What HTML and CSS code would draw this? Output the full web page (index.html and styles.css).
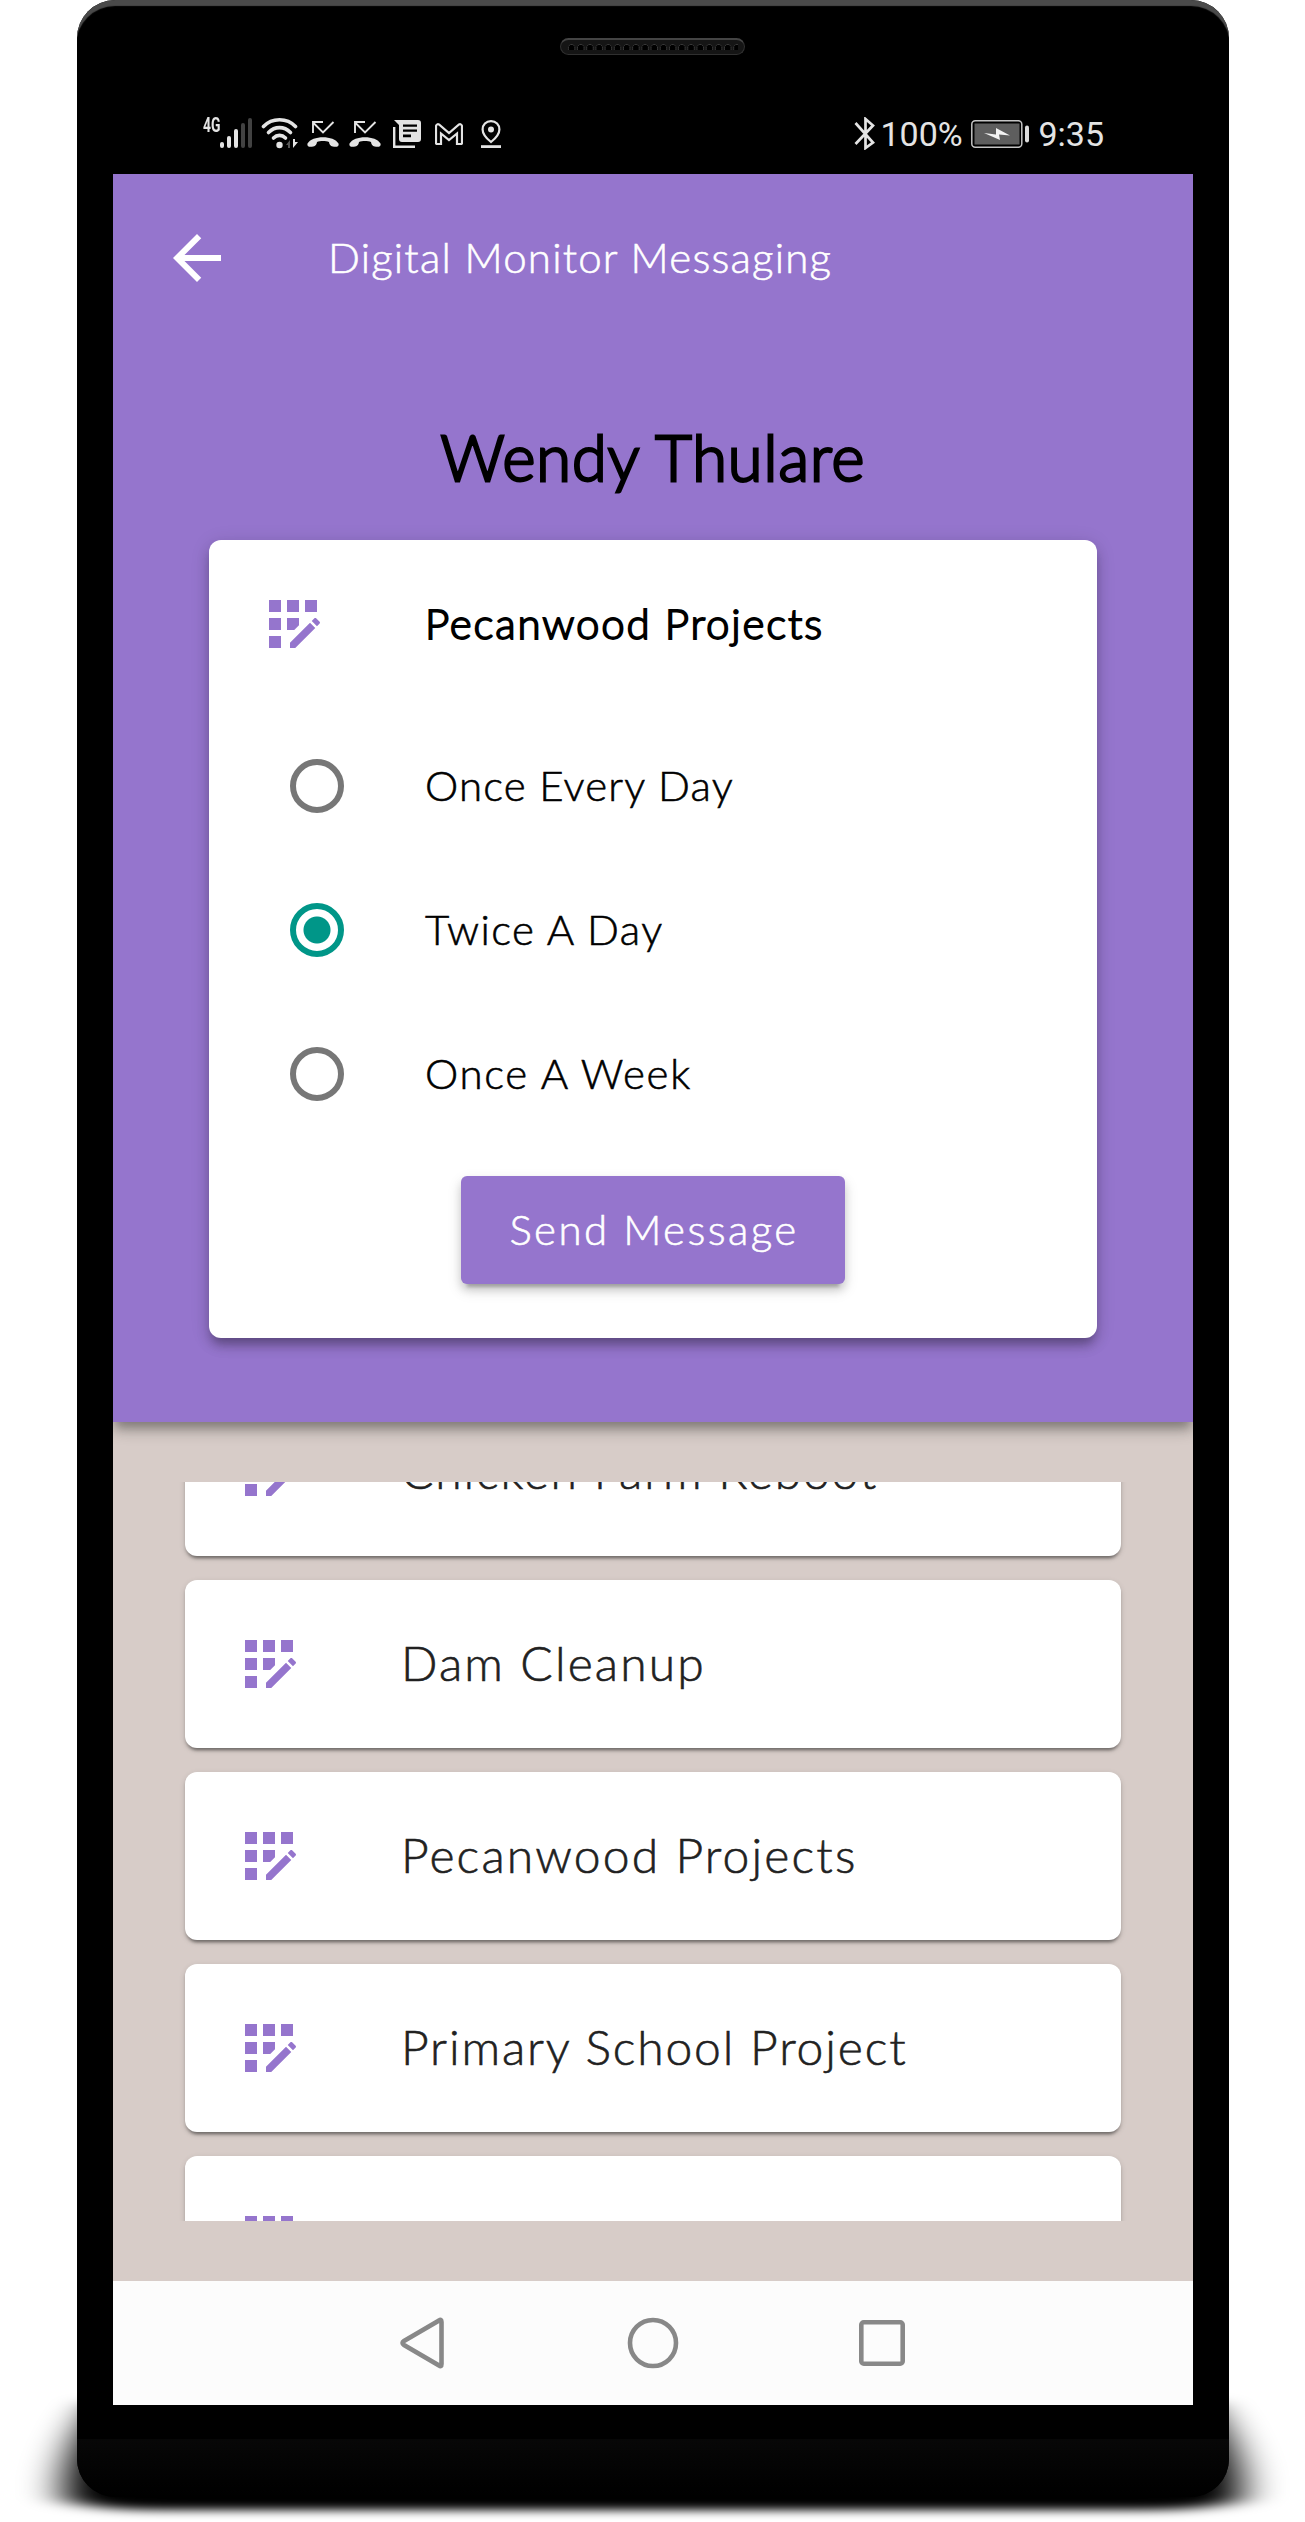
FILE: index.html
```html
<!DOCTYPE html>
<html lang="en">
<head>
<meta charset="utf-8">
<title>Digital Monitor Messaging</title>
<link rel="stylesheet" href="styles.css">
</head>
<body>
<svg class="defs" width="0" height="0" aria-hidden="true">
  <symbol id="registration" viewBox="0 0 24 24"><path d="M10 4h4v4h-4zM4 16h4v4H4zM4 10h4v4H4zM4 4h4v4H4zM14 12.42V10h-4v4h2.42zM20.88 11.29l-1.17-1.17c-.16-.16-.42-.16-.58 0l-.88.88L20 12.75l.88-.88c.16-.16.16-.42 0-.58zM11 18.25V20h1.75l6.67-6.67-1.75-1.75zM16 4h4v4h-4z"/></symbol>
  <symbol id="missed" viewBox="0 0 32 28"><path d="M6 2.5l10 10L26.500 2M6 13V2h10" fill="none" stroke="currentColor" stroke-width="1.900"/><path d="M.5 23.500C5 15 27 15 31.500 23.500c.6 2-.5 3.300-3 3.300-4 0-6-1.500-6.500-4.800-3-1.300-9-1.300-12 0C9.500 25.300 7.500 26.800 3.500 26.800 1 26.800 0 25.500.5 23.500z"/></symbol>
</svg>
<main class="stage">
  <svg class="ground-shadow" viewBox="0 0 1305 150" aria-hidden="true">
    <defs><filter id="soft" x="-10%" y="-50%" width="120%" height="200%"><feGaussianBlur stdDeviation="21 5"/></filter></defs>
    <path filter="url(#soft)" d="M100 30C76 60 58 105 66 128Q90 137 150 138H1155Q1215 137 1239 128C1247 105 1229 60 1205 30z"/>
  </svg>
  <div class="phone">
    <div class="speaker"><div class="holes"></div></div>
    <div class="statusbar">
      <div class="status-left">
        <span class="net">4G</span>
        <svg class="signal" width="32" height="32" viewBox="0 0 32 32"><g fill="#e4e4e4"><rect x="0" y="25" width="4" height="6" rx="2"/><rect x="7" y="19" width="4" height="12" rx="2"/><rect x="14" y="12" width="4" height="19" rx="2"/></g><g fill="#424242"><rect x="21" y="6" width="4" height="25" rx="2"/><rect x="28" y="1" width="4" height="30" rx="2"/></g></svg>
        <svg class="wifi" width="38" height="32" viewBox="0 0 38 32"><g fill="none" stroke="#e4e4e4" stroke-width="3.600" stroke-linecap="round"><path d="M2.500 9.500C11 .5 26 .5 34.500 9.500"/><path d="M7.500 15.500C14 9 23 9 29.500 15.500"/><path d="M12.500 21C16 17.500 21 17.500 24.500 21"/></g><circle cx="18.500" cy="28" r="3.200" fill="#e4e4e4"/><path d="M29 23v8h-2v-3h-2z" fill="#555"/><path d="M32 22v9l5-6h-3v-3z" fill="#e4e4e4"/></svg>
        <svg class="call" width="32" height="28"><use href="#missed"/></svg>
        <svg class="call2" width="32" height="28"><use href="#missed"/></svg>
        <svg class="news" width="28" height="28" viewBox="0 0 28 28"><path fill-rule="evenodd" d="M1 0h24q3 0 3 3v16q0 3-3 3H9q-3 0-3-3V5zM10 4.500v2.200h14V4.500zM10 9.500v2.200h14V9.500zM10 14.500v2.800h8v-2.800z"/><path d="M1.200 7v19.700H22" fill="none" stroke="currentColor" stroke-width="2.400"/></svg>
        <svg class="mail" width="28" height="22" viewBox="0 0 28 22"><path d="M1 20V3Q2 .5 4 1.500L14 10 24 1.500Q26 .5 27 3V20q0 1-1 1H22V10.500L14 17 6 10.500V21H2q-1 0-1-1z" fill="none" stroke="currentColor" stroke-width="2.200"/></svg>
        <svg class="pin" width="20" height="28" viewBox="0 0 20 28"><path d="M10 1.100C5 1.100 1.600 4.800 1.600 9.400 1.600 14 5 18 10 22 15 18 18.400 14 18.400 9.400 18.400 4.800 15 1.100 10 1.100z" fill="none" stroke="currentColor" stroke-width="2.200"/><circle cx="10" cy="9.600" r="3"/><path d="M0 25.200h20V28H0z"/></svg>
      </div>
      <div class="status-right">
        <svg width="21" height="33" viewBox="0 0 21 33"><path d="M1.500 6L19 25.500 11.500 31V2L19 8.500 1.500 27" fill="none" stroke="currentColor" stroke-width="2.700"/></svg>
        <span class="percent">100%</span>
        <svg class="battery" width="58" height="28" viewBox="0 0 58 28"><rect x=".8" y=".8" width="50" height="26.400" rx="3.500" fill="none" stroke="#c4c4c4" stroke-width="1.500"/><rect x="3.500" y="3.500" width="45" height="21" fill="#5e5e5e"/><path d="M13 13l12 1.500V8l14 7.500-11-1 1 5.500z" fill="#f2f2f2"/><rect x="54" y="5.500" width="4" height="17" rx="2" fill="#dcdcdc"/></svg>
        <span class="clock">9:35</span>
      </div>
    </div>
    <div class="screen">
      <section class="panel">
        <header class="appbar">
          <svg class="back" viewBox="0 0 24 24"><path d="M20 11H7.830l5.590-5.590L12 4l-8 8 8 8 1.410-1.410L7.830 13H20v-2z"/></svg>
          <h1 class="apptitle">Digital Monitor Messaging</h1>
        </header>
        <h2 class="person">Wendy Thulare</h2>
        <div class="card">
          <div class="card-head"><svg class="icon"><use href="#registration"/></svg><strong class="project">Pecanwood Projects</strong></div>
          <div class="option"><span class="radio"></span><span class="label daily">Once Every Day</span></div>
          <div class="option"><span class="radio on"></span><span class="label twice">Twice A Day</span></div>
          <div class="option"><span class="radio"></span><span class="label weekly">Once A Week</span></div>
          <button class="send"><span>Send Message</span></button>
        </div>
      </section>
      <section class="list">
        <div class="item first"><svg class="icon"><use href="#registration"/></svg><span class="name short">Chicken Farm Reboot</span></div>
        <div class="item"><svg class="icon"><use href="#registration"/></svg><span class="name">Dam Cleanup</span></div>
        <div class="item"><svg class="icon"><use href="#registration"/></svg><span class="name">Pecanwood Projects</span></div>
        <div class="item"><svg class="icon"><use href="#registration"/></svg><span class="name short">Primary School Project</span></div>
        <div class="item"><svg class="icon"><use href="#registration"/></svg></div>
      </section>
    </div>
    <nav class="navbar">
      <svg width="44" height="52" viewBox="0 0 44 52"><path d="M39 3.500Q41.500 1.500 41.500 5V47Q41.500 50.500 39 48.500L4 28Q1 26 4 24z"/></svg>
      <svg width="52" height="52" viewBox="0 0 52 52"><circle cx="26" cy="26" r="23"/></svg>
      <svg width="46" height="46" viewBox="0 0 46 46"><rect x="2.300" y="2.300" width="41.400" height="41.400" rx="2.500"/></svg>
    </nav>
    <div class="chin"></div>
  </div>
</main>
</body>
</html>
```
FILE: styles.css
```css
* { box-sizing: border-box; }
body { margin: 0; background: #fff; font-family: "Lato", "Liberation Sans", sans-serif; }
svg { display: block; flex: none; fill: currentColor; }
h1, h2 { margin: 0; font-weight: 400; }
.defs { position: absolute; }
.stage { position: relative; width: 1305px; height: 2522px; padding-left: 77px; overflow: hidden; }
.ground-shadow { position: absolute; left: 0; bottom: 0; width: 1305px; height: 150px; fill: #000; overflow: visible; }
.phone {
  position: relative; display: flex; flex-direction: column; width: 1152px; height: 2497px; padding: 38px 36px 0;
  background: #000; border-radius: 38px; overflow: hidden; box-shadow: inset 0 7px 1px -1px #4a4a4a;
}
.speaker {
  width: 185px; height: 17px; margin-left: 447px; padding: 4px 6px; border-radius: 9px; background: #151515;
  border: 1px solid #303030; border-top: 2px solid #444; display: flex; flex: none;
}
.holes { flex: 1; background: radial-gradient(ellipse 3.3px 4px, #000 85%, #3a3a3a 100%, transparent 115%) 0 0 / 9.2px 9px repeat-x; }
.statusbar { display: flex; justify-content: space-between; height: 119px; padding: 62px 89px 0 90px; color: #e4e4e4; font-family: "Roboto", sans-serif; flex: none; }
.status-left { display: flex; align-items: flex-start; }
.net { width: 17px; font: 700 21px/20px "Roboto", sans-serif; transform: scaleX(.66); transform-origin: 0 0; margin-top: -2px; white-space: nowrap; }
.wifi { margin-left: 9px; }
.call { margin: 3px 0 0 8px; }
.call2 { margin: 3px 0 0 10px; }
.news { margin: 3px 0 0 12px; }
.mail { margin: 6px 0 0 14px; }
.pin { margin: 3px 0 0 18px; }
.status-right { display: flex; align-items: flex-start; font-size: 34px; line-height: 34px; }
.percent { width: 80px; margin-left: 5px; white-space: nowrap; }
.battery { margin: 3px 9px 0 11px; }
.screen { height: 2107px; background: #d7ccc8; overflow: hidden; flex: none; }
.panel { position: relative; z-index: 1; height: 1248px; background: #9575cd; box-shadow: 0 9px 9px -3px rgba(0,0,0,.2), 0 3px 20px rgba(0,0,0,.18), 0 8px 14px rgba(0,0,0,.14); }
.appbar { display: flex; align-items: center; height: 168px; padding-left: 48px; color: #fff; }
.back { width: 72px; height: 72px; }
.apptitle { margin: -2px 0 0 95px; font-size: 42px; line-height: 50px; font-weight: 300; letter-spacing: 1.2px; -webkit-text-stroke: .6px #fff; white-space: nowrap; }
.person { height: 198px; padding-top: 77px; text-align: center; font-size: 63px; line-height: 76px; font-weight: 300; letter-spacing: 1.05px; -webkit-text-stroke: 2.8px #000; }
.card {
  width: 888px; height: 798px; margin: 0 auto; background: #fff; border-radius: 12px; padding-top: 12px;
  box-shadow: 0 9px 9px -3px rgba(0,0,0,.2), 0 3px 20px rgba(0,0,0,.12), 0 8px 14px rgba(0,0,0,.14);
}
.icon { width: 72px; height: 72px; color: #9575cd; }
.card-head { display: flex; align-items: center; height: 144px; padding-left: 48px; margin-bottom: 18px; }
.project { margin: -2px 0 0 96px; font-size: 42px; line-height: 50px; font-weight: 300; letter-spacing: 1.85px; -webkit-text-stroke: 1.8px #000; white-space: nowrap; }
.option { display: flex; align-items: center; height: 144px; padding-left: 81px; }
.radio { width: 54px; height: 54px; border: 6px solid #777; border-radius: 50%; }
.radio.on { border-color: #009688; background: radial-gradient(circle, #009688 13px, transparent 14px); }
.label { margin: -2px 0 0 81px; font-size: 42px; line-height: 50px; font-weight: 300; -webkit-text-stroke: .6px #000; white-space: nowrap; }
.daily { letter-spacing: 1.15px; }
.twice { letter-spacing: 1.4px; }
.weekly { letter-spacing: 1.7px; }
.send {
  display: flex; align-items: center; justify-content: center; width: 384px; height: 108px; margin: 30px auto 0; padding: 0 0 2px 2px; border: 0; border-radius: 6px;
  background: #9575cd; color: #fff; font: 300 42px/50px "Lato", sans-serif; letter-spacing: 2.4px; -webkit-text-stroke: .6px #fff; white-space: nowrap;
  box-shadow: 0 9px 3px -6px rgba(0,0,0,.2), 0 6px 9px rgba(0,0,0,.14), 0 6px 15px rgba(0,0,0,.12);
}
.list { display: flex; flex-direction: column; gap: 24px; height: 739px; margin-top: 60px; padding: 0 72px; overflow: hidden; }
.item {
  display: flex; align-items: center; flex: none; height: 168px; padding-left: 48px; background: #fff; border-radius: 12px; color: #212121;
  box-shadow: 0 5px 3px -3px rgba(0,0,0,.3), 0 3px 3px rgba(0,0,0,.16), 0 2px 6px rgba(0,0,0,.12);
}
.item.first { margin-top: -94px; }
.name { margin: -3px 0 0 96px; font-size: 48px; line-height: 58px; font-weight: 300; letter-spacing: 2.15px; -webkit-text-stroke: .6px #212121; white-space: nowrap; }
.name.short { letter-spacing: 1.85px; }
.navbar { display: flex; align-items: center; height: 124px; padding-left: 287px; background: #fcfcfc; flex: none; }
.navbar svg { fill: none; stroke: #888; stroke-width: 4.6; }
.navbar svg:nth-child(2) { margin-left: 183px; }
.navbar svg:nth-child(3) { margin-left: 180px; }
.chin { height: 58px; margin: 34px -36px 0; background: linear-gradient(#070707, #000); flex: none; }
```
